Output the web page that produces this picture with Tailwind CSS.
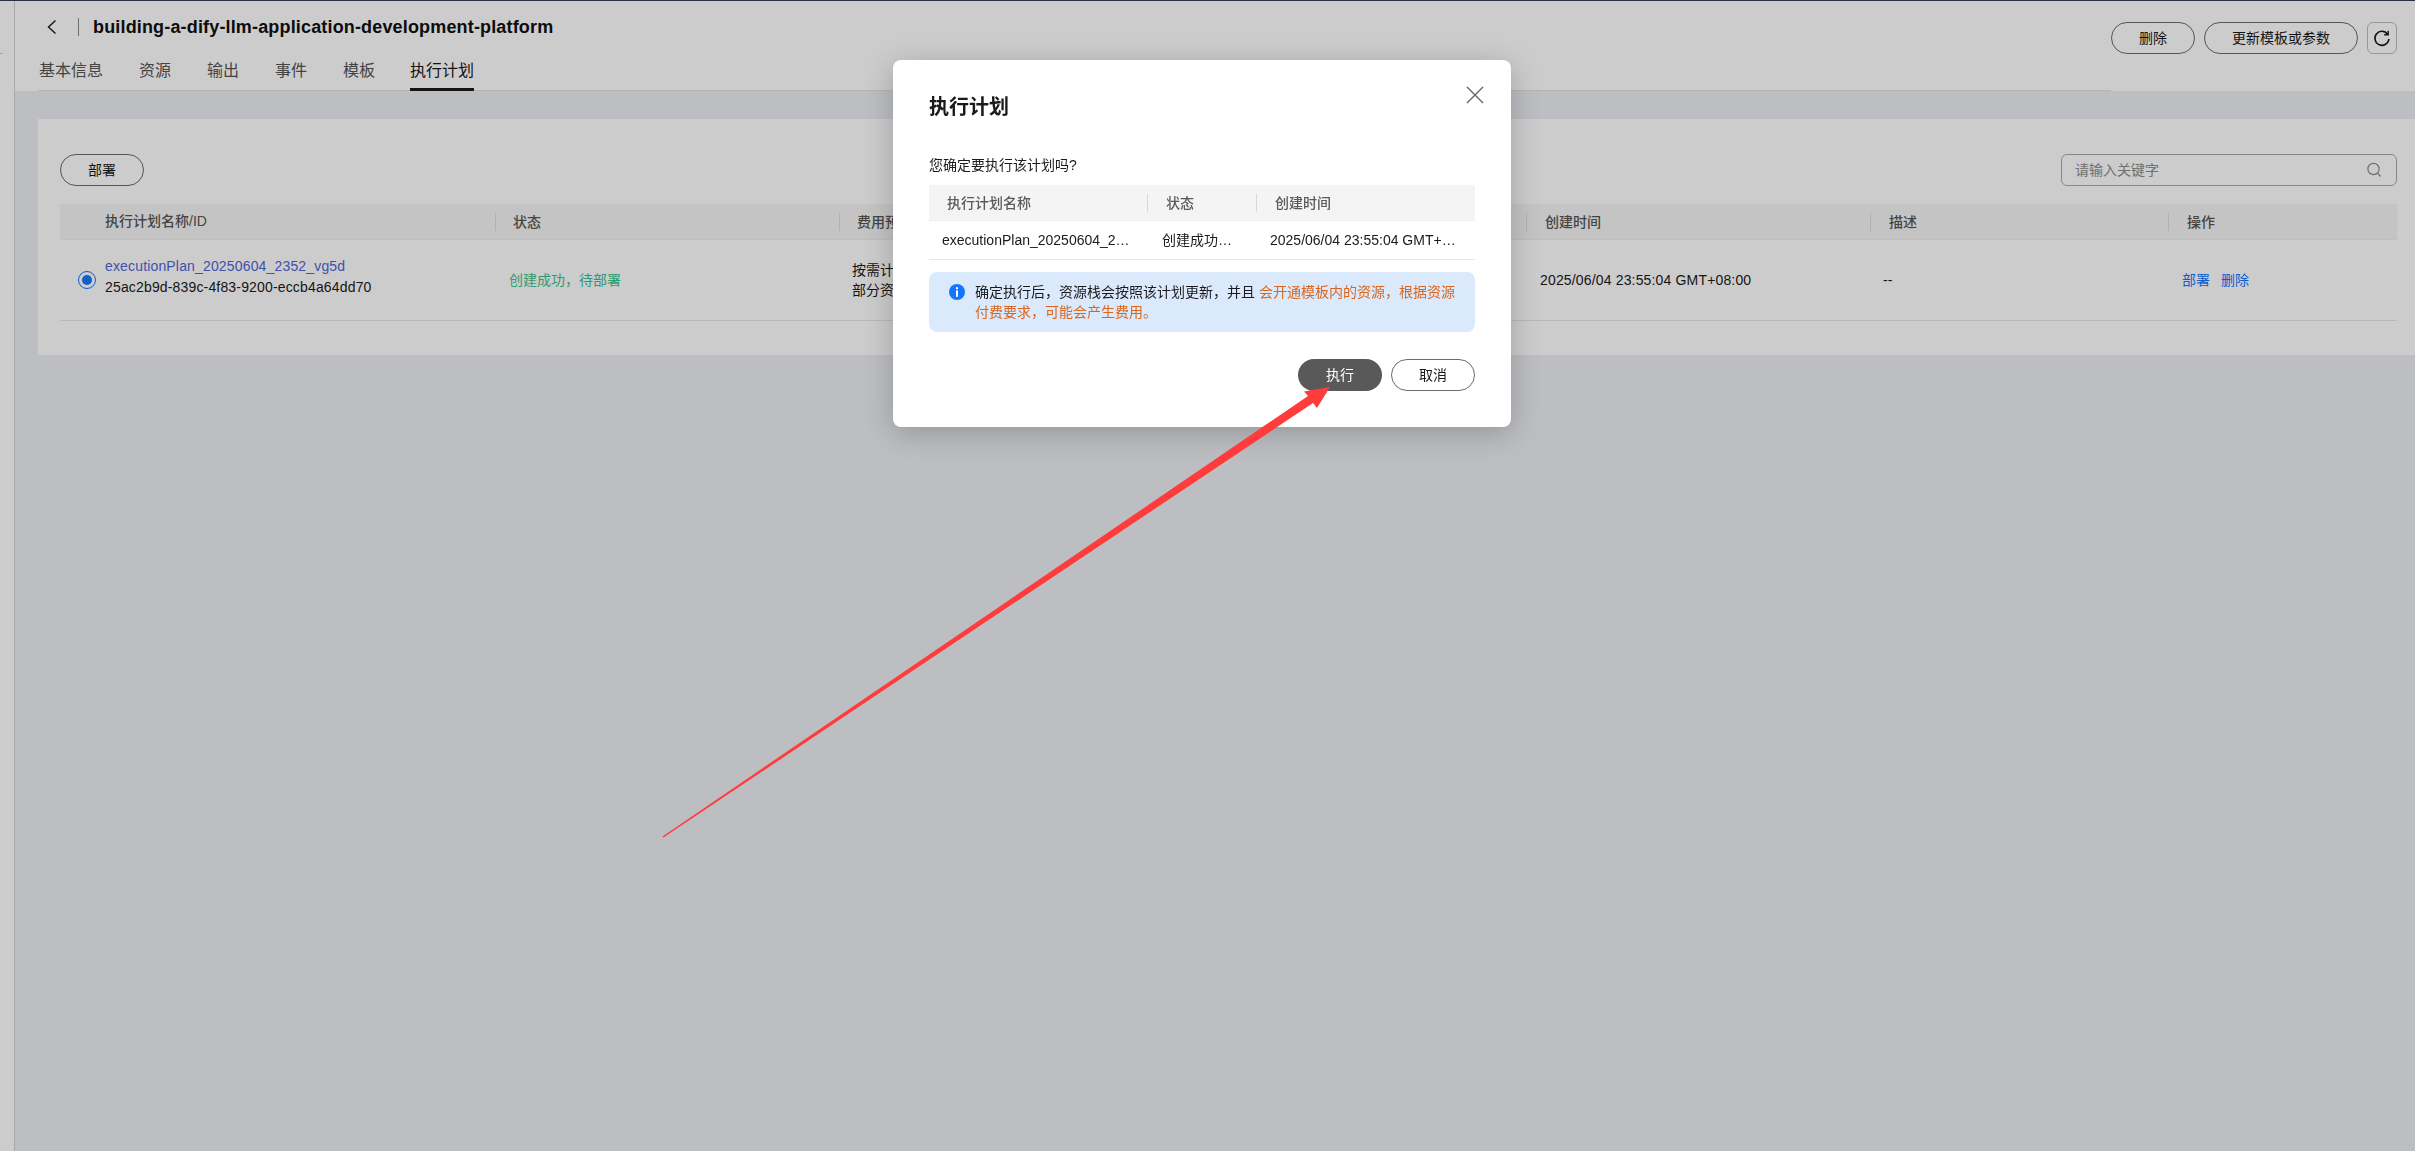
<!DOCTYPE html>
<html lang="zh-CN">
<head>
  <meta charset="UTF-8">
  <title>执行计划</title>
  <script src="https://cdn.jsdelivr.net/npm/@tailwindcss/browser@4"></script>
</head>
<body class="h-screen overflow-hidden bg-white text-sm text-[#1a1a1a] font-['Liberation_Sans','Noto_Sans_CJK_SC',sans-serif]">
  <div class="h-px bg-[#343c50]"></div>
  <div class="flex h-[1150px]">
    <!-- sidebar stub -->
    <div class="w-[15px] shrink-0 border-r border-[#d4d4d4] bg-white pt-[52px]">
      <div class="h-px w-[3px] bg-[#cfcfcf]"></div>
    </div>

    <div class="flex-1 flex flex-col min-w-0">
      <!-- header -->
      <header class="bg-white">
        <div class="flex justify-between pl-[31px] pr-[18px] pt-[16px] h-[53px]">
          <div class="flex items-center h-[20px]">
            <svg class="w-[12px] h-[16px]" viewBox="0 0 12 16" fill="none" stroke="#1a1a1a" stroke-width="1.4"><path d="M9.5 1.5 2.5 8l7 6.5"/></svg>
            <div class="w-px h-[18px] bg-[#8a8a8a] ml-[20px] mr-[14px]"></div>
            <h1 class="text-[18px] font-bold text-[#111] leading-[20px] tracking-[0.16px]">building-a-dify-llm-application-development-platform</h1>
          </div>
          <div class="flex gap-[9px] mt-[5px]">
            <button class="w-[84px] h-[32px] rounded-full border border-[#6b6b6b]">删除</button>
            <button class="w-[154px] h-[32px] rounded-full border border-[#6b6b6b]">更新模板或参数</button>
            <button class="w-[30px] h-[32px] rounded-md border border-[#bdbdbd] flex items-center justify-center">
              <svg class="w-[18px] h-[18px]" viewBox="0 0 18 18" fill="none" stroke="#1a1a1a" stroke-width="1.6"><path d="M14.6 5.2A7 7 0 1 0 15.9 10"/><path d="M15.2 1.8v4h-4" stroke-width="1.4"/></svg>
            </button>
          </div>
        </div>
        <nav class="ml-[23px] w-[2073px] h-[37px] border-b border-[#e3e3e3] pl-px flex gap-9 text-base text-[#555]">
          <a class="h-[37px] flex items-center border-b-[3px] border-transparent">基本信息</a>
          <a class="h-[37px] flex items-center border-b-[3px] border-transparent">资源</a>
          <a class="h-[37px] flex items-center border-b-[3px] border-transparent">输出</a>
          <a class="h-[37px] flex items-center border-b-[3px] border-transparent">事件</a>
          <a class="h-[37px] flex items-center border-b-[3px] border-transparent">模板</a>
          <a class="h-[37px] flex items-center border-b-[3px] border-[#1a1a1a] text-[#1a1a1a] -ml-px">执行计划</a>
        </nav>
      </header>

      <!-- content -->
      <main class="flex-1 bg-[#eceef2] pt-[28px] pl-[23px]">
        <section class="h-[236px] bg-white pt-[35px] pl-[22px] pr-[18px]">
          <div class="flex justify-between h-[32px]">
            <button class="w-[84px] h-[32px] rounded-full border border-[#6b6b6b]">部署</button>
            <div class="w-[336px] h-[32px] rounded-md border border-[#a8a8a8] flex items-center justify-between pl-[13px] pr-[14px] text-[#8c8c8c]">
              <span>请输入关键字</span>
              <svg class="w-[16px] h-[16px]" viewBox="0 0 16 16" fill="none" stroke="#8a8a8a" stroke-width="1.2"><circle cx="7.5" cy="7" r="5.6"/><path d="m11.5 11 3 3.5"/></svg>
            </div>
          </div>

          <div class="mt-[18px]">
            <div class="grid grid-cols-[435px_344px_687px_344px_298px_230px] h-[36px] items-center bg-[#f5f5f5] border-b border-[#eeeeee] text-[#555] font-medium">
              <div class="pl-[45px] -mt-px">执行计划名称/ID</div>
              <div class="border-l border-[#dcdcdc] h-[18px] leading-[18px] pl-[17px]">状态</div>
              <div class="border-l border-[#dcdcdc] h-[18px] leading-[18px] pl-[17px]">费用预估</div>
              <div class="border-l border-[#dcdcdc] h-[18px] leading-[18px] pl-[18px]">创建时间</div>
              <div class="border-l border-[#dcdcdc] h-[18px] leading-[18px] pl-[18px]">描述</div>
              <div class="border-l border-[#dcdcdc] h-[18px] leading-[18px] pl-[18px]">操作</div>
            </div>
            <div class="grid grid-cols-[435px_344px_687px_344px_298px_230px] h-[81px] items-center border-b border-[#e6e6e6]">
              <div class="flex items-center pl-[18px] gap-[9px]">
                <span class="w-[18px] h-[18px] rounded-full border border-[#1476ff] bg-white flex items-center justify-center">
                  <span class="w-[10px] h-[10px] rounded-full bg-[#1476ff]"></span>
                </span>
                <div class="leading-[21px] -mt-[7px] tracking-[0.16px]">
                  <div class="text-[#4f66d6]">executionPlan_20250604_2352_vg5d</div>
                  <div>25ac2b9d-839c-4f83-9200-eccb4a64dd70</div>
                </div>
              </div>
              <div class="pl-[14px] text-[#38c28f]">创建成功，待部署</div>
              <div class="pl-[13px] leading-[20px]">
                <div>按需计费</div>
                <div>部分资源免费</div>
              </div>
              <div class="pl-[14px] tracking-[0.16px]">2025/06/04 23:55:04 GMT+08:00</div>
              <div class="pl-[13px]">--</div>
              <div class="pl-[14px] flex gap-[11px] text-[#1476ff]">
                <a>部署</a>
                <a>删除</a>
              </div>
            </div>
          </div>
        </section>
      </main>
    </div>
  </div>

  <!-- dialog mask -->
  <div class="fixed inset-0 bg-black/20"></div>

  <!-- dialog -->
  <div class="absolute left-[893px] top-[60px] w-[618px] h-[367px] bg-white rounded-lg shadow-[0_6px_30px_rgba(0,0,0,0.22)] pt-[36px] px-[36px]">
    <div class="flex justify-between">
      <h2 class="text-xl font-bold leading-[22px]">执行计划</h2>
      <svg class="w-[18px] h-[18px] -mt-[10px] -mr-[9px]" viewBox="0 0 18 18" fill="none" stroke="#666" stroke-width="1.4"><path d="m1 1 16 16M17 1 1 17"/></svg>
    </div>
    <p class="mt-[37px] leading-[20px]">您确定要执行该计划吗?</p>

    <div class="mt-[10px]">
      <div class="grid grid-cols-[218px_109px_219px] h-[36px] items-center bg-[#f4f4f4] border-b border-[#eeeeee] text-[#5a5a5a] font-medium">
        <div class="pl-[18px]">执行计划名称</div>
        <div class="border-l border-[#d8d8d8] h-[18px] leading-[18px] pl-[18px]">状态</div>
        <div class="border-l border-[#d8d8d8] h-[18px] leading-[18px] pl-[18px]">创建时间</div>
      </div>
      <div class="grid grid-cols-[218px_109px_219px] h-[39px] items-center border-b border-[#e8e8e8]">
        <div class="pl-[13px] pr-[17px] truncate">executionPlan_20250604_2352_vg5d</div>
        <div class="pl-[15px] pr-[20px] truncate">创建成功，待部署</div>
        <div class="pl-[14px] pr-[18px] truncate">2025/06/04 23:55:04 GMT+08:00</div>
      </div>
    </div>

    <div class="mt-[12px] h-[60px] rounded-lg bg-[#dbe9fd] flex pl-[20px] pt-[10px] gap-[10px]">
      <svg class="w-[16px] h-[16px] mt-[2px] shrink-0" viewBox="0 0 16 16"><circle cx="8" cy="8" r="8" fill="#1476ff"/><rect x="7" y="3.2" width="2" height="2" fill="#fff"/><rect x="7" y="6.4" width="2" height="6.4" fill="#fff"/></svg>
      <p class="w-[482px] leading-[20px]">确定执行后，资源栈会按照该计划更新，并且 <span class="text-[#d9661f]">会开通模板内的资源，根据资源付费要求，可能会产生费用。</span></p>
    </div>

    <div class="mt-[27px] flex justify-end gap-[9px]">
      <button class="w-[84px] h-[32px] rounded-full bg-[#595959] text-white">执行</button>
      <button class="w-[84px] h-[32px] rounded-full border border-[#6b6b6b]">取消</button>
    </div>
  </div>

  <!-- red annotation arrow -->
  <svg class="absolute left-0 top-0 w-[2415px] h-[1151px] pointer-events-none" viewBox="0 0 2415 1151">
    <polygon fill="#ff3b3b" points="662.6,836.4 1308,396 1304,391.5 1330,387 1317,408 1313,403 663.4,837.6"/>
  </svg>
</body>
</html>
